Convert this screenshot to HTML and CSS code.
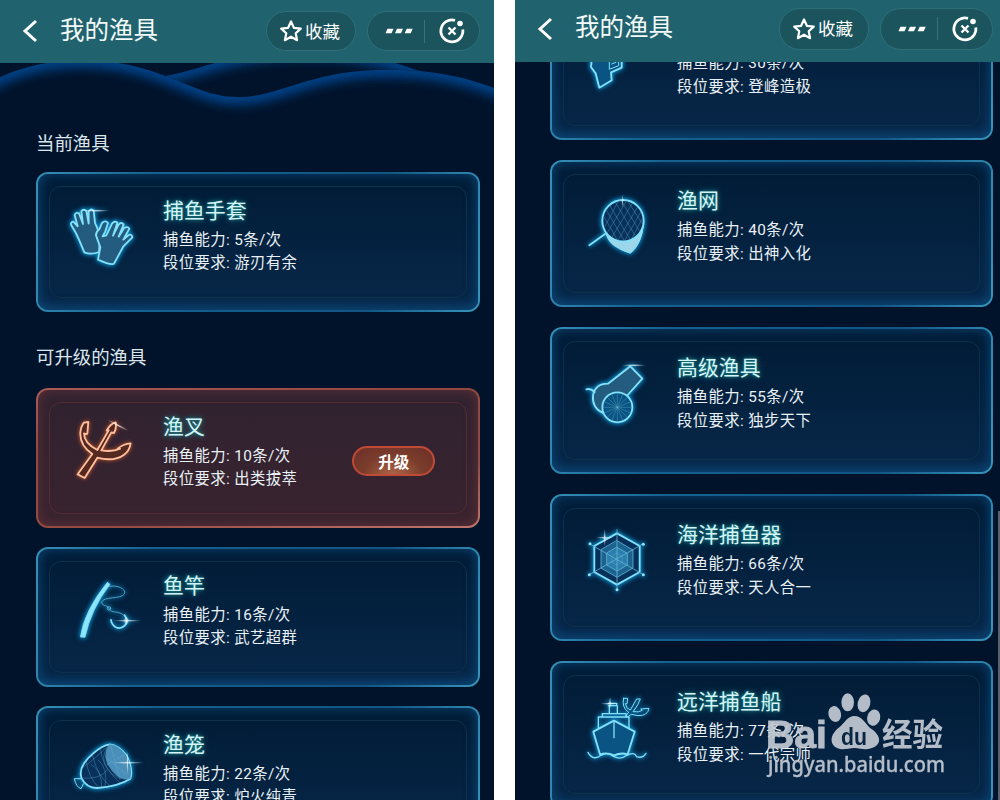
FILE: index.html
```html
<!DOCTYPE html>
<html lang="zh-CN">
<head>
    <meta charset="UTF-8">
    <meta name="viewport" content="width=device-width, initial-scale=1.0">
    <title>我的渔具</title>
    <link rel="stylesheet" href="styles.css">
</head>
<body>

    <!-- shared icon parts -->
    <svg class="defs" width="0" height="0">
        <defs>
            <symbol id="back" viewBox="0 0 18 24"><path d="M15 2L4 12l11 10" fill="none" stroke="#fff" stroke-width="3"/></symbol>
            <symbol id="star" viewBox="0 0 24 24"><path d="M12 2.500l2.900 6.300 6.900.8-5.100 4.700 1.400 6.900-6.100-3.500-6.100 3.500 1.400-6.900-5.100-4.700 6.900-.8z" fill="none" stroke="#fff" stroke-width="2.200" stroke-linejoin="round"/></symbol>
            <symbol id="dots" viewBox="0 0 28 6"><path d="M2.500 .8h6L6.500 5.300h-6zM12 .8h6L16 5.300h-6zM21.700 .8h6L25.700 5.300h-6z" fill="#fff"/></symbol>
            <symbol id="close" viewBox="0 0 28 28">
                <path d="M17 3.300A11 11 0 1 0 24.800 12.500" fill="none" stroke="#fff" stroke-width="2.800"/>
                <circle cx="22" cy="6.500" r="2.800" fill="#fff"/>
                <path d="M10.500 10.500l7 7M17.500 10.500l-7 7" stroke="#fff" stroke-width="2.300"/>
            </symbol>
            <radialGradient id="shine"><stop offset="0" stop-color="#fff" stop-opacity="0.8"/><stop offset="1" stop-color="#fff" stop-opacity="0"/></radialGradient>
        </defs>
    </svg>

    <div class="phone phone-left">
        <div class="header">
            <svg class="back"><use href="#back"/></svg>
            <h1>我的渔具</h1>
            <div class="pill fav"><svg><use href="#star"/></svg><span>收藏</span></div>
            <div class="pill menu"><svg class="dots"><use href="#dots"/></svg><i></i><svg class="close"><use href="#close"/></svg></div>
        </div>
        <svg class="waves" viewBox="0 189 1482 189">
            <defs>
                <filter id="soft" filterUnits="userSpaceOnUse" x="-150" y="50" width="1800" height="400"><feGaussianBlur stdDeviation="16"/></filter>
                <clipPath id="back-wave"><path d="M440 235C560 225 640 180 760 165C980 130 1150 170 1290 225L1482 290V300H440z"/></clipPath>
                <clipPath id="front-wave"><path d="M0 232C140 165 330 165 480 222C580 258 630 291 715 291C840 291 930 209 1160 209C1300 209 1400 232 1482 264V400H0z"/></clipPath>
            </defs>
            <g clip-path="url(#back-wave)"><path d="M440 235C560 225 640 180 760 165C980 130 1150 170 1290 225" fill="none" stroke="#05458d" stroke-width="44" filter="url(#soft)"/></g>
            <g clip-path="url(#front-wave)">
                <path d="M0 189H1482V400H0z" fill="#00132b"/>
                <path d="M-100 285L0 232C140 165 330 165 480 222C580 258 630 291 715 291C840 291 930 209 1160 209C1300 209 1400 232 1482 264L1600 310" fill="none" stroke="#05458d" stroke-width="44" filter="url(#soft)"/>
            </g>
        </svg>

        <h2 class="current">当前渔具</h2>
        <div class="card">
            <svg class="icon" viewBox="78 81 270 270">
                <path d="M163 262L148 226Q138 202 124 181Q121 171 130 170L143 184L134 151Q137 140 147 145L159 177L154 139Q161 130 169 138L176 176L176 139Q184 129 191 137L195 174L203 192Q205 200 199 209L209 235L207 261Q184 270 163 262z"/>
                <path d="M204 284L211 247L198 211Q198 200 208 193L216 174Q226 164 234 174L226 199L218 214L229 211L246 176Q254 166 262 173L249 212L265 180Q273 169 281 178L266 215L282 190Q292 182 298 191L280 224L296 210Q306 206 307 217L280 244L252 296Q245 302 204 284z"/>
                <ellipse class="shine" cx="198" cy="137" rx="42" ry="4"/>
            </svg>
            <div class="info">
                <h3>捕鱼手套</h3>
                <p>捕鱼能力: 5条/次</p>
                <p>段位要求: 游刃有余</p>
            </div>
        </div>

        <h2 class="upgrade">可升级的渔具</h2>
        <div class="list">
            <div class="card card-red">
                <svg class="icon" viewBox="78 84 270 270">
                    <path d="M162 128L175 126L172 160Q170 164 162 160Q162 190 202 210L236 151L230 152Q240 132 257 127Q260 146 252 159L244 157L214 211Q248 217 270 206L263 206Q280 192 302 190Q298 213 282 224Q252 246 202 233L164 294L143 283L187 222Q150 197 151 160Q152 140 162 128z"/>
                    <ellipse class="shine" cx="264" cy="136" rx="36" ry="4" transform="rotate(28 264 136)"/>
                </svg>
                <div class="info">
                    <h3>渔叉</h3>
                    <p>捕鱼能力: 10条/次</p>
                    <p>段位要求: 出类拔萃</p>
                </div>
                <button class="btn">升级</button>
            </div>
            <div class="card">
                <svg class="icon" viewBox="78 81 270 270">
                    <path class="solid" d="M232 127L240 133Q183 207 165 292L151 291Q163 212 232 127z"/>
                    <path class="line" d="M238 139C268 134 290 150 283 162C273 178 221 169 216 185C212 198 231 195 236 204C242 219 253 213 270 219C288 227 294 240 290 249"/>
                    <circle class="line" cx="237" cy="205" r="5"/>
                    <path class="hook" d="M284 226C302 252 276 271 256 261Q244 252 243 240"/>
                    <ellipse class="shine" cx="292" cy="242" rx="42" ry="4"/>
                    <ellipse class="shine" cx="289" cy="242" rx="9" ry="13"/>
                </svg>
                <div class="info">
                    <h3>鱼竿</h3>
                    <p>捕鱼能力: 16条/次</p>
                    <p>段位要求: 武艺超群</p>
                </div>
            </div>
            <div class="card">
                <svg class="icon" viewBox="78 558 270 270">
                    <path class="dark" d="M155 715Q142 681 189 641Q216 616 239 613Q266 616 289 645Q310 687 301 716Q265 739 201 744Q169 743 155 715z"/>
                    <path class="none mouth" d="M239 613Q263 614 286 642Q309 680 301 716Q266 729 232 673Q218 638 239 613z"/>
                    <path class="hair" d="M239 613Q206 649 232 687Q260 724 301 716M187 644Q201 708 242 740M168 662Q174 710 207 744M211 624Q216 684 272 730M160 682Q194 657 239 613M157 714Q212 719 232 690M231 675L284 643M225 650L289 703M242 618L270 718M252 642L300 689M205 660Q235 684 225 741M184 674Q216 690 215 743"/>
                    <path class="thin" d="M152 716L133 716Q138 741 153 746L160 732"/>
                    <ellipse class="shine" cx="294" cy="668" rx="48" ry="4"/>
                    <ellipse class="shine" cx="292" cy="668" rx="3" ry="36"/>
                </svg>
                <div class="info">
                    <h3>渔笼</h3>
                    <p>捕鱼能力: 22条/次</p>
                    <p>段位要求: 炉火纯青</p>
                </div>
            </div>
        </div>
    </div>

    <div class="phone phone-right">
        <div class="header">
            <svg class="back"><use href="#back"/></svg>
            <h1>我的渔具</h1>
            <div class="pill fav"><svg><use href="#star"/></svg><span>收藏</span></div>
            <div class="pill menu"><svg class="dots"><use href="#dots"/></svg><i></i><svg class="close"><use href="#close"/></svg></div>
        </div>
        <div class="list">
            <div class="card">
                <svg class="icon" viewBox="182 39 270 270">
                    <path class="blue" d="M252 140L245 201L259 220L270 263L307 241L305 217L337 203L337 145z"/>
                    <path class="thin" d="M300 180V208L328 197V180M307 192L320 187"/>
                </svg>
                <div class="info">
                    <h3>渔枪</h3>
                    <p>捕鱼能力: 30条/次</p>
                    <p>段位要求: 登峰造极</p>
                </div>
            </div>
            <div class="card">
                <svg class="icon" viewBox="76 90 270 270">
                    <path class="none net" d="M183 248Q188 290 257 310Q293 282 297 222Q280 272 234 272Q205 270 183 248z"/>
                    <circle class="dark" cx="235" cy="212" r="62"/>
                    <path class="hair" d="M178 200L218 270M185 180L238 271M195 166L256 268M211 155L272 258M229 151L285 244M248 152L295 224M180 230L222 152M188 248L246 152M203 260L264 158M221 269L280 169M240 271L290 183M262 264L295 202"/>
                    <path class="hook" d="M134 286L181 252"/>
                    <path class="thin" d="M183 250Q200 290 257 310Q291 282 297 222"/>
                    <ellipse class="shine" cx="234" cy="153" rx="3" ry="20"/>
                </svg>
                <div class="info">
                    <h3>渔网</h3>
                    <p>捕鱼能力: 40条/次</p>
                    <p>段位要求: 出神入化</p>
                </div>
            </div>
            <div class="card">
                <svg class="icon" viewBox="76 78 270 270">
                    <path d="M175 276Q142 261 145 224Q151 188 190 188L257 136L293 173L249 222"/>
                    <path class="hook" d="M125 205Q138 201 150 213"/>
                    <circle class="blue" cx="218" cy="259" r="45"/>
                    <path class="hair" d="M218 216V302M175 259H261M188 229L248 289M248 229L188 289M201 219L235 299M235 219L201 299M178 242L258 276M178 276L258 242"/>
                    <ellipse class="shine" cx="267" cy="133" rx="36" ry="4"/>
                </svg>
                <div class="info">
                    <h3>高级渔具</h3>
                    <p>捕鱼能力: 55条/次</p>
                    <p>段位要求: 独步天下</p>
                </div>
            </div>
            <div class="card">
                <svg class="icon" viewBox="76 87 270 270">
                    <path class="dark" d="M217 145L285 183V261L217 299L149 261V183z"/>
                    <path class="line" d="M217 167L265 195V249L217 277L169 249V195z" fill="#1c638f"/>
                    <path class="line" d="M217 187L248 205V240L217 258L186 240V205z" fill="#2b7eae"/>
                    <path class="hair" d="M217 205L233 214V231L217 240L201 231V214z"/>
                    <path class="line" d="M217 134V314M134 176L296 269M134 269L296 176"/>
                    <g class="joints"><circle cx="217" cy="314" r="4.500"/><circle cx="136" cy="176" r="4.500"/><circle cx="296" cy="178" r="4.500"/><circle cx="134" cy="269" r="4.500"/><circle cx="296" cy="269" r="4.500"/></g>
                    <ellipse class="shine" cx="180" cy="158" rx="26" ry="4"/>
                    <ellipse class="shine" cx="180" cy="158" rx="4" ry="26"/>
                </svg>
                <div class="info">
                    <h3>海洋捕鱼器</h3>
                    <p>捕鱼能力: 66条/次</p>
                    <p>段位要求: 天人合一</p>
                </div>
            </div>
            <div class="card">
                <svg class="icon" viewBox="76 76 270 270">
                    <path class="blue" d="M166 296L146 228L208 195L270 228L249 296Q229 290 208 299Q187 289 166 296z"/>
                    <path class="mid" d="M161 216V184H253V216M173 184V174H244V184M194 172V150H218V172M191 143H216V150H191"/>
                    <path class="mid" d="M208 198V246"/>
                    <path class="mid" d="M130 290Q145 317 169 299Q189 287 208 303Q229 313 246 299Q269 287 276 303Q294 309 304 293"/>
                    <path class="thin" d="M237 128L249 128L247 144L242 144Q244 159 257 163L276 130L287 130L279 148L265 168Q283 171 293 164L288 160L313 158Q309 181 280 180L260 176L249 184L245 178L252 170Q230 155 237 128z"/>
                    <ellipse class="shine" cx="195" cy="144" rx="28" ry="4"/>
                    <ellipse class="shine" cx="196" cy="142" rx="4" ry="18"/>
                </svg>
                <div class="info">
                    <h3>远洋捕鱼船</h3>
                    <p>捕鱼能力: 77条/次</p>
                    <p>段位要求: 一代宗师</p>
                </div>
            </div>
        </div>
        <div class="scrollbar"></div>

        <svg class="watermark" viewBox="0 0 184 96">
            <g fill="#c3cad4">
                <text class="wm-logo" x="0" y="62.500" textLength="61" lengthAdjust="spacingAndGlyphs">Bai</text>
                <ellipse cx="68.700" cy="29" rx="6.300" ry="8" transform="rotate(-14 68.700 29)"/>
                <ellipse cx="81.700" cy="17.300" rx="6.300" ry="9"/>
                <ellipse cx="98" cy="18.300" rx="6.300" ry="9" transform="rotate(14 98 18.300)"/>
                <ellipse cx="107.700" cy="32.700" rx="6.500" ry="8.200" transform="rotate(16 107.700 32.700)"/>
                <path d="M88.500 31C96 31 99 38 104 43C117 51 116 62 102 64C97 65 94 63 88.500 63C83 63 79 65 74 64C62 61 64 49 73 42.500C79 38 81 31 88.500 31z"/>
                <text class="wm-cn" x="116" y="61" textLength="61" lengthAdjust="spacingAndGlyphs">经验</text>
                <text class="wm-url" x="2" y="87" textLength="177" lengthAdjust="spacingAndGlyphs">jingyan.baidu.com</text>
            </g>
            <text class="wm-du" x="75" y="59.500" textLength="26" lengthAdjust="spacingAndGlyphs">du</text>
        </svg>
    </div>

</body>
</html>
```
FILE: styles.css
```css
* {
    box-sizing: border-box;
}
body {
    margin: 0;
    display: flex;
    gap: 21px;
    height: 800px;
    overflow: hidden;
    background: #fff;
    font-family: Roboto, "Noto Sans CJK SC", sans-serif;
    color: #e9f1f6;
}
h1, h2, h3, p {
    margin: 0;
    font-weight: 400;
    white-space: nowrap;
}
.defs {
    position: absolute;
}
.phone {
    position: relative;
    height: 800px;
    overflow: hidden;
    display: flex;
    flex-direction: column;
    background: #00132b;
}
.phone-left {
    width: 494px;
}
.phone-right {
    width: 485px;
}

/* Header */
.header {
    position: relative;
    z-index: 2;
    flex: none;
    display: flex;
    align-items: center;
    height: 63px;
    padding: 0 14px 1px 20px;
    background: #20636e;
}
.phone-right .header {
    height: 62px;
    padding: 0 7px 5px 20px;
}
.header .back {
    width: 18px;
    height: 24px;
    margin-left: 1px;
}
.header h1 {
    margin: -1px auto 0 21px;
    font-size: 24.5px;
    line-height: 36px;
    color: #f4fafa;
}
.pill {
    display: flex;
    align-items: center;
    height: 40px;
    border: 1px solid #2f6f79;
    border-radius: 20px;
    background: #1b545d;
}
.phone-right .pill {
    height: 42px;
    border-radius: 21px;
}
.fav {
    width: 90px;
    padding-left: 12px;
    margin-right: 11px;
    font-size: 17.5px;
    color: #fff;
}
.fav svg {
    width: 24px;
    height: 24px;
    margin-right: 2px;
}
.fav span {
    margin-top: -2px;
}
.menu {
    width: 113px;
    padding-left: 17px;
}
.menu i {
    width: 1px;
    height: 23px;
    margin-left: 11px;
    background: #34747d;
}
.dots {
    width: 28px;
    height: 6px;
}
.close {
    width: 28px;
    height: 28px;
    margin-left: 13px;
}
.waves {
    position: absolute;
    top: 63px;
    left: 0;
    width: 494px;
    height: 63px;
}

/* Section titles */
h2 {
    position: relative;
    margin-left: 36px;
    font-size: 18.4px;
    line-height: 28px;
    color: #dde5ec;
}
.current {
    margin-top: 67px;
    margin-bottom: 14px;
}
.upgrade {
    margin-top: 32px;
    margin-bottom: 16px;
}

/* Cards */
.list {
    display: flex;
    flex-direction: column;
    gap: 19px;
}
.card {
    position: relative;
    flex: none;
    display: flex;
    width: 444px;
    height: 140px;
    margin-left: 36px;
    padding: 18px 0 0 18px;
    border: 2px solid transparent;
    border-radius: 12px;
    background:
        linear-gradient(#001b35, #08284a) padding-box,
        linear-gradient(100deg, #368fb6, #14618f 25%, #115583 75%, #3795bb) border-box;
}
.card::before, .card::after {
    content: '';
    position: absolute;
    pointer-events: none;
}
.card::before {
    inset: 0;
    border-radius: 10px;
    box-shadow: inset 0 0 13px #0a4370, inset 0 -5px 12px -3px #0d4372;
}
.card::after {
    inset: 12px 11px;
    border: 1px solid #0e304c;
    border-radius: 12px;
}
.card-red {
    background:
        linear-gradient(#302230, #39232f) padding-box,
        linear-gradient(170deg, #a85b56, #92483f 30%, #944b42 70%, #c0776a) border-box;
}
.card-red::before {
    box-shadow: inset 0 0 13px #5f3137;
}
.card-red::after {
    border-color: #522c34;
}
.phone-right .list {
    margin-top: -69px;
    gap: 20px;
}
.phone-right .card {
    width: 443px;
    height: 147px;
    margin-left: 35px;
}
.info {
    padding-top: 4px;
    margin-left: 17px;
}
.info h3 {
    font-size: 20.9px;
    line-height: 30px;
    margin-bottom: 3px;
    color: #d4f4f8;
    text-shadow: 0 0 6px #1c8f93, 0 0 3px #1a7884;
}
.info p {
    font-size: 15.35px;
    line-height: 22.500px;
    letter-spacing: 0.4px;
}
.phone-right .info {
    padding-top: 6px;
}
.phone-right .info h3 {
    margin-bottom: 3px;
}
.phone-right .info p {
    line-height: 23.500px;
}
.btn {
    width: 83px;
    height: 30px;
    margin: 38px 0 0 55px;
    padding: 0;
    border: 2px solid #bf4a35;
    border-radius: 16px;
    background: radial-gradient(ellipse at 50% 110%, #b0674a, #7a3c2b 55%, #6d2f28);
    color: #fff;
    font: 700 15.5px "Noto Sans CJK SC", sans-serif;
    line-height: 22px;
}

/* Equipment icons */
.icon {
    flex: none;
    width: 90px;
    height: 90px;
    overflow: visible;
    fill: #245c80;
    stroke: #83e1fa;
    stroke-width: 5.5;
    stroke-linejoin: round;
    stroke-linecap: round;
    filter: drop-shadow(0 0 2px #1292cc) drop-shadow(0 0 2px #07669b);
}
.card-red .icon {
    fill: #55291f;
    stroke: #ffc0a0;
    filter: drop-shadow(0 0 2px #c65828);
}
.icon .thin {
    stroke-width: 3;
}
.icon .line {
    stroke: #62b5d3;
    stroke-width: 2.500;
}
.icon .thin, .icon .line:not([fill]), .icon .mid, .icon .hook {
    fill: none;
}
.icon .mid {
    stroke-width: 4;
}
.icon .hair {
    fill: none;
    stroke: #66b2cb;
    stroke-width: 1.500;
    opacity: 0.7;
}
.icon .none, .icon .shine, .icon .joints {
    stroke: none;
}
.icon .solid, .icon .joints {
    fill: #8ce5f8;
}
.icon .solid {
    stroke-width: 2;
}
.icon .dark {
    fill: #07305a;
}
.icon .blue {
    fill: #0a5484;
}
.icon .mouth {
    fill: #4a8fba;
}
.icon .net {
    fill: #9bd6ea;
}
.icon .shine {
    fill: url(#shine);
}

.scrollbar {
    position: absolute;
    top: 511px;
    right: 0;
    width: 2px;
    height: 289px;
    background: #59616e;
}

/* Watermark */
.watermark {
    position: absolute;
    left: 251px;
    top: 685px;
    width: 184px;
    height: 96px;
    opacity: 0.92;
}
.wm-logo {
    font: 700 39px "Liberation Sans", sans-serif;
    stroke: #c3cad4;
    stroke-width: 0.8;
}
.wm-cn {
    font: 700 32px "Noto Sans CJK SC", sans-serif;
}
.wm-url {
    font: 500 22px "Noto Sans", sans-serif;
    stroke: #c3cad4;
    stroke-width: 0.3;
}
.wm-du {
    font: 700 23px "Liberation Sans", sans-serif;
    fill: #0a2744;
}
```
